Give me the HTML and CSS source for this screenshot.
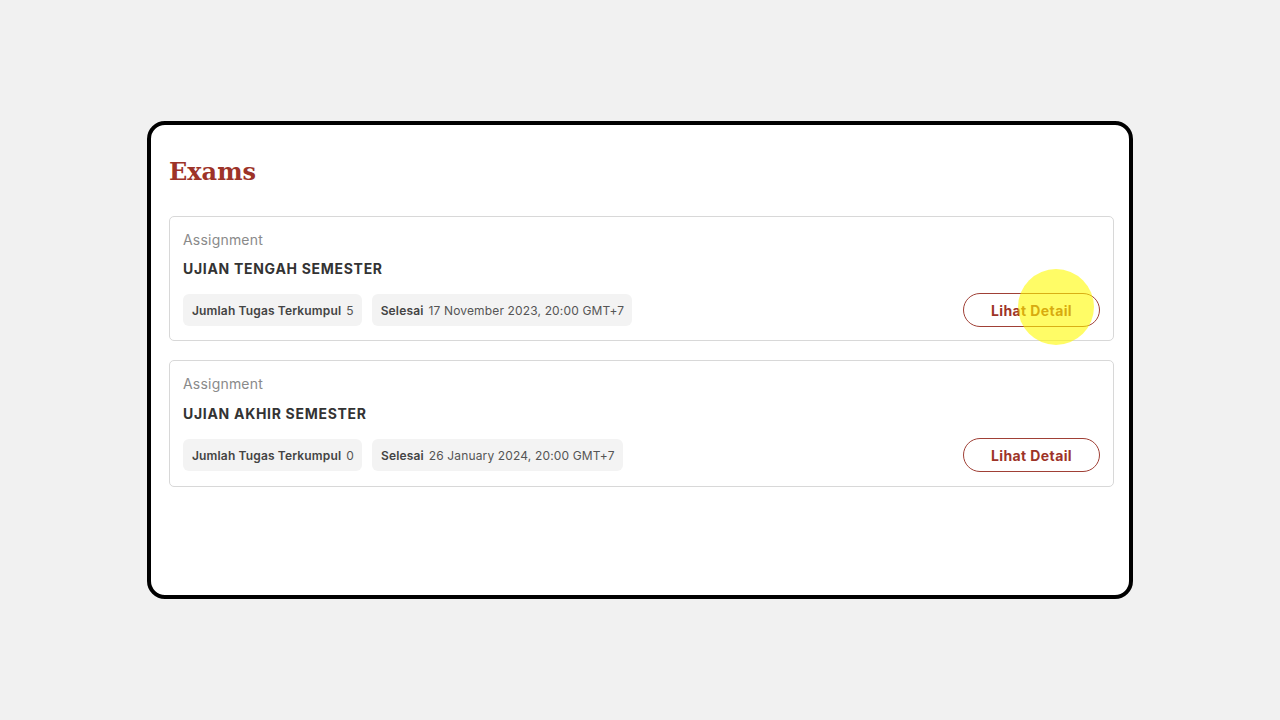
FILE: index.html
```html
<!DOCTYPE html>
<html>
<head>
<meta charset="utf-8">
<link rel="stylesheet" href="styles.css">
</head>
<body>
<div class="frame">
  <h1 class="title">Exams</h1>
  <div class="list">
    <div class="card">
      <div class="info">
        <div class="type">Assignment</div>
        <div class="name">UJIAN TENGAH SEMESTER</div>
        <div class="chips">
          <span class="chip"><b>Jumlah Tugas Terkumpul</b> 5</span>
          <span class="chip"><b>Selesai</b> 17 November 2023, 20:00 GMT+7</span>
        </div>
      </div>
      <button class="btn">Lihat Detail<span class="cursor"></span></button>
    </div>
    <div class="card card-tall">
      <div class="info">
        <div class="type">Assignment</div>
        <div class="name">UJIAN AKHIR SEMESTER</div>
        <div class="chips">
          <span class="chip"><b>Jumlah Tugas Terkumpul</b> 0</span>
          <span class="chip"><b>Selesai</b> 26 January 2024, 20:00 GMT+7</span>
        </div>
      </div>
      <button class="btn">Lihat Detail</button>
    </div>
  </div>
</div>
</body>
</html>
```
FILE: styles.css
```css
html, body { margin: 0; padding: 0; }
body {
  background: #f1f1f1;
  font-family: Inter, "Noto Sans", sans-serif;
  width: 1280px;
  height: 720px;
  padding-top: 121px;
  box-sizing: border-box;
}
.frame {
  margin-left: 147px;
  width: 986px;
  height: 478px;
  box-sizing: border-box;
  border: 4px solid #000;
  border-radius: 18px;
  background: #fff;
  padding: 30px 15px 0 18px;
}
.title {
  margin: 0 0 27px 0;
  font-family: "DejaVu Serif", serif;
  font-weight: bold;
  font-size: 24px;
  line-height: 34px;
  color: #9d3328;
}
.list { display: flex; flex-direction: column; gap: 19px; }
.card {
  border: 1px solid #d8d8d8;
  border-radius: 5px;
  padding: 13px 13px 14px 13px;
  display: flex;
  align-items: flex-end;
  justify-content: space-between;
}
.card-tall { padding-bottom: 15px; }
.card-tall .name { margin-top: 11px; }
.type { font-size: 14px; color: #8a8a8a; line-height: 20px; letter-spacing: 0.2px; }
.name {
  margin-top: 10px;
  font-size: 14px;
  font-weight: 700;
  letter-spacing: 0.7px;
  color: #333;
  line-height: 18px;
}
.chips { display: flex; gap: 10px; margin-top: 16px; }
.chip {
  background: #f3f3f3;
  border-radius: 6px;
  height: 32px;
  padding: 0 8px 0 9px;
  display: flex;
  align-items: center;
  font-size: 12px;
  letter-spacing: 0.15px;
  color: #555;
  gap: 5px;
}
.chip b { font-weight: 600; color: #444; }
.btn {
  position: relative;
  width: 137px;
  height: 34px;
  border: 1px solid #a04036;
  border-radius: 17px;
  background: #fff;
  color: #9d3328;
  font-family: Inter, "Noto Sans", sans-serif;
  font-size: 14px;
  font-weight: 700;
  letter-spacing: 0.4px;
  margin-bottom: -1px;
  padding: 0;
}
.cursor {
  position: absolute;
  left: 54px;
  top: -25px;
  width: 76px;
  height: 76px;
  border-radius: 50%;
  background: rgba(255, 250, 0, 0.6);
  pointer-events: none;
}
```
